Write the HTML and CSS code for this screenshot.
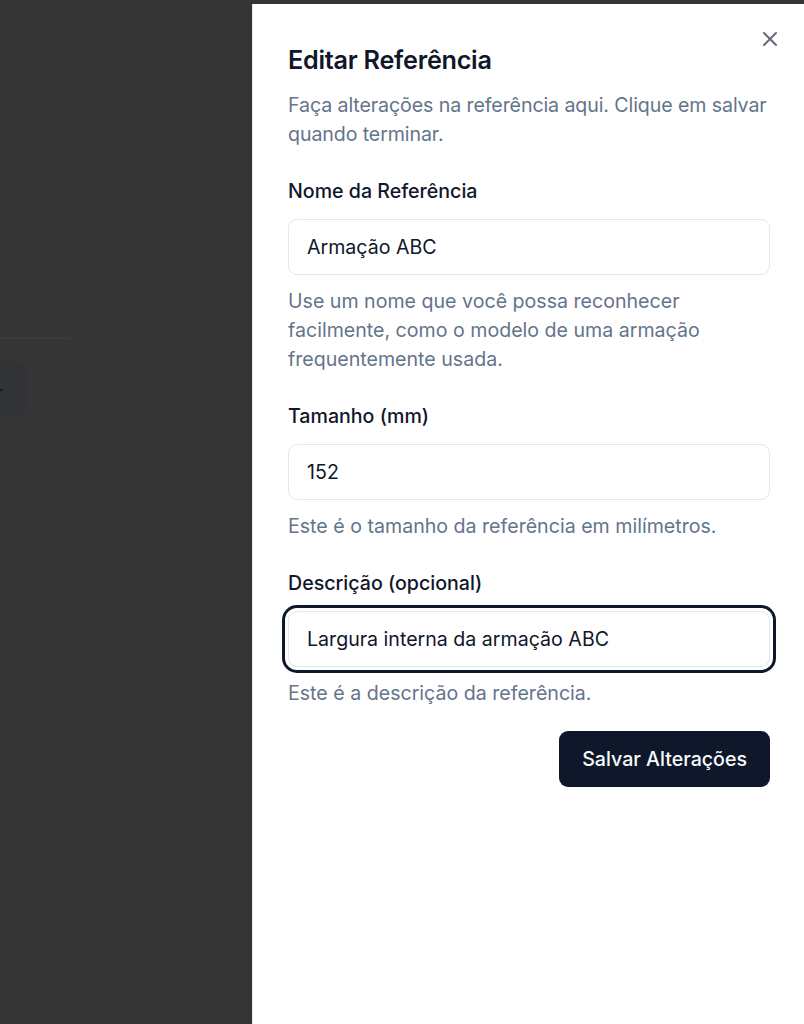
FILE: index.html
```html
<!DOCTYPE html>
<html lang="pt-BR">
<head>
    <meta charset="UTF-8">
    <meta name="viewport" content="width=device-width, initial-scale=1.0">
    <title>Editar Referência</title>
    <link rel="stylesheet" href="styles.css">
</head>
<body>

    <div class="backdrop">
        <div class="ghost-line"></div>
        <div class="ghost-button"><span class="ghost-mark"></span></div>
    </div>

    <aside class="sheet">
        <button class="close" aria-label="Fechar">
            <svg width="24" height="24" viewBox="0 0 24 24" fill="none" stroke="currentColor" stroke-width="2" stroke-linecap="round" stroke-linejoin="round">
                <path d="M18 6 6 18"/>
                <path d="m6 6 12 12"/>
            </svg>
        </button>

        <div class="sheet-header">
            <h2>Editar Referência</h2>
            <p>Faça alterações na referência aqui. Clique em salvar quando terminar.</p>
        </div>

        <form class="form">
            <div class="field">
                <label for="nome">Nome da Referência</label>
                <input type="text" id="nome" value="Armação ABC">
                <p class="hint">Use um nome que você possa reconhecer facilmente, como o modelo de uma armação frequentemente usada.</p>
            </div>

            <div class="field">
                <label for="tamanho">Tamanho (mm)</label>
                <input type="text" id="tamanho" value="152">
                <p class="hint">Este é o tamanho da referência em milímetros.</p>
            </div>

            <div class="field">
                <label for="descricao">Descrição (opcional)</label>
                <input type="text" id="descricao" class="focused" value="Largura interna da armação ABC">
                <p class="hint">Este é a descrição da referência.</p>
            </div>

            <div class="actions">
                <button type="button" class="save">Salvar Alterações</button>
            </div>
        </form>
    </aside>

</body>
</html>
```

FILE: styles.css
```css
* {
    box-sizing: border-box;
}
body {
    margin: 0;
    height: 1024px;
    display: flex;
    background-color: #353535;
    font-family: Inter, "Noto Sans", sans-serif;
    color: #0f172a;
    overflow: hidden;
}
.backdrop {
    width: 252px;
    flex-shrink: 0;
    padding-top: 338px;
}
.ghost-line {
    width: 70px;
    height: 1px;
    background-color: #3f3f3f;
}
.ghost-button {
    width: 26px;
    height: 56px;
    margin-top: 23px;
    background-color: #323336;
    border-radius: 0 9px 9px 0;
    display: flex;
    align-items: center;
}
.ghost-mark {
    width: 3px;
    height: 2px;
    background-color: #1c1c1c;
}
.sheet {
    position: relative;
    flex: 1;
    margin-top: 4px;
    background-color: #ffffff;
    border-left: 1px solid #e2e8f0;
    padding: 37px 34px 0 35px;
}
.close {
    position: absolute;
    top: 23px;
    right: 22px;
    padding: 0;
    border: none;
    background: none;
    color: #4b5563;
    opacity: 0.85;
    display: flex;
}
.sheet-header h2 {
    margin: 0;
    font-size: 25.2px;
    line-height: 39px;
    font-weight: 600;
    letter-spacing: -0.01em;
}
.sheet-header p {
    margin: 11px -4px 0 0;
    font-size: 19.6px;
    line-height: 29px;
    letter-spacing: -0.1px;
    color: #64748b;
}
.form {
    margin-top: 28px;
    display: flex;
    flex-direction: column;
    gap: 28px;
}
.field {
    display: flex;
    flex-direction: column;
}
.field label {
    font-size: 19.6px;
    line-height: 28px;
    font-weight: 500;
}
.field input {
    margin-top: 14px;
    height: 56px;
    padding: 0 18px;
    border: 1px solid #e2e8f0;
    border-radius: 9px;
    font-family: inherit;
    font-size: 19.6px;
    color: #0f172a;
    background-color: #ffffff;
    outline: none;
}
.field input.focused {
    box-shadow: 0 0 0 3px #ffffff, 0 0 0 6px #0f172a;
}
.hint {
    margin: 12px 0 0;
    font-size: 19.6px;
    line-height: 29px;
    color: #64748b;
}
.actions {
    display: flex;
    justify-content: flex-end;
    margin-top: -5px;
}
.save {
    height: 56px;
    padding: 0 23px;
    border: none;
    border-radius: 9px;
    background-color: #0f172a;
    color: #f8fafc;
    font-family: inherit;
    font-size: 19.6px;
    font-weight: 500;
    cursor: pointer;
}
```
